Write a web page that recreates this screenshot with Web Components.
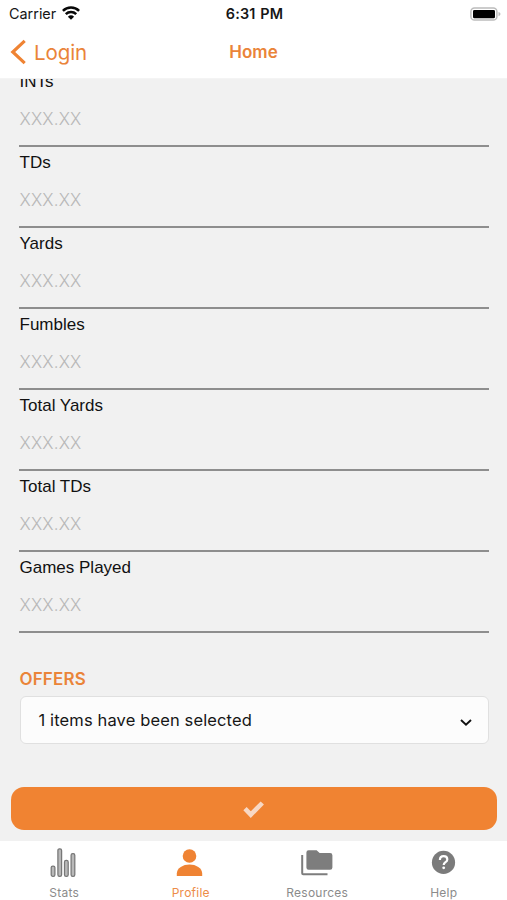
<!DOCTYPE html>
<html lang="en"><head><meta charset="utf-8"><title>Home</title>
<style>html,body{margin:0;height:100%;overflow:hidden;background:#f1f1f1}</style></head><body>
<profile-app></profile-app>
<script>
const make=(name,html,fn)=>customElements.define(name,class extends HTMLElement{
  constructor(){super();this.attachShadow({mode:'open'}).innerHTML='<style>*{box-sizing:border-box}</style>'+html;}
  connectedCallback(){if(fn)fn(this,this.shadowRoot);}
});
make('status-bar',`<style>:host{display:grid;grid-template-columns:1fr auto 1fr;height:27px;align-items:center;padding:0 7px 0 9px;color:#161616}
.l{display:flex;align-items:center;gap:6px;font-size:14.4px;letter-spacing:0}.t{font-size:14.4px;font-weight:600;letter-spacing:.22px;word-spacing:.8px}svg{display:block;margin-bottom:1px}.b{justify-self:end;margin:0 -1px 0 0}</style>
<div class="l"><span>Carrier</span><svg width="18" height="14" viewBox="0 0 18 14"><g fill="none" stroke="#080808" stroke-width="2.5"><path d="M.9 4.9a11.5 11.5 0 0 1 16.2 0"/><path d="M3.8 8.1a7.4 7.4 0 0 1 10.4 0"/></g><path d="M9 13.8 5.9 10.7a4.5 4.5 0 0 1 6.2 0z" fill="#080808"/></svg></div>
<div class="t">6:31 PM</div>
<svg class="b" width="31" height="14" viewBox="0 0 31 14"><rect x=".9" y=".9" width="26" height="12.2" rx="3.6" fill="#fff" stroke="#bcbcbc" stroke-width="1.5"/><rect x="3" y="2.9" width="22" height="8.4" rx="1.4" fill="#000"/><path d="M28.5 5v4.2q2-.6 2-2.1t-2-2.1z" fill="#bcbcbc"/></svg>`);
make('nav-bar',`<style>:host{display:grid;grid-template-columns:1fr auto 1fr;height:50px;align-items:center;padding:0 10px;color:#ea8439}
.l{display:flex;align-items:center;gap:7px;font-size:20.5px;letter-spacing:-.1px}.t{font-size:17px;font-weight:600}svg{display:block}</style>
<div class="l"><svg width="17" height="26" viewBox="0 0 17 26"><path d="M14.7 1.9 2.8 13l11.9 11.1" fill="none" stroke="#ef8333" stroke-width="3.2"/></svg><slot name="back"></slot></div><div class="t"><slot></slot></div>`);
make('stat-field',`<style>:host{display:block;height:81px;border-bottom:2px solid #8e8e8e;font:17px/20px "Liberation Sans",Arial,sans-serif;color:#111}
.l{padding:6px 0 0 1px;height:43px}.p{padding-left:1px;font:17px/20px Inter,sans-serif;font-weight:300;letter-spacing:.15px;color:#b8b8b8}</style>
<div class="l"><slot></slot></div><div class="p">XXX.XX</div>`);
make('multi-select',`<style>:host{display:flex;align-items:center;justify-content:space-between;height:48px;border:1px solid #e0e0e0;border-radius:6px;background:#fcfcfc;padding:0 15px 0 18px;font-size:16.5px;letter-spacing:.13px;color:#161616}svg{display:block;margin-top:3px}</style>
<span><slot></slot></span><svg width="14" height="10" viewBox="0 0 14 10"><path d="m2 3 5 4.7L12 3" fill="none" stroke="#111" stroke-width="1.9"/></svg>`);
make('submit-button',`<style>:host{display:grid;place-items:center;height:43px;border-radius:13px;background:#f08332}svg{display:block}</style>
<svg width="22" height="18" viewBox="0 0 22 18"><path d="m2 8.6 5.8 6L19.3 3" fill="none" stroke="#f8d8c4" stroke-width="4.6"/></svg>`);
const icons={
stats:'<g transform="translate(0 -1.4)" fill="#b9b9b9" stroke="#777" stroke-width="1.25"><rect x="3.2" y="20.4" width="3.7" height="10.4" rx="1.6"/><rect x="9.9" y="3.2" width="3.7" height="27.6" rx="1.6"/><rect x="16.5" y="14.8" width="3.7" height="16" rx="1.6"/><rect x="23.1" y="8" width="3.7" height="22.8" rx="1.6"/></g>',
profile:'<circle cx="14.5" cy="9" r="6.8" fill="#ef8333"/><path d="M1.8 29.1v-2.5c0-5.8 6.3-9.2 12.7-9.2s12.7 3.4 12.7 9.2v2.5z" fill="#ef8333"/>',
resources:'<path d="M5.4 5.4Q5.4 3.2 7.6 3.2h8l3 2.8h10.5q2.3 0 2.3 2.3v12.2q0 2.3-2.3 2.3H7.6q-2.2 0-2.2-2.3z" fill="#7d7d7d"/><path d="M1.2 8v18.3q0 1 1 1H26.5" fill="none" stroke="#7d7d7d" stroke-width="2"/>',
help:'<g transform="translate(.5 .8)"><circle cx="15" cy="14.6" r="11.6" fill="#7b7b7b"/><path d="M11.4 12.1c0-2.3 1.6-3.7 3.7-3.7s3.7 1.3 3.7 3.2c0 2.8-3.6 2.7-3.6 5.5" fill="none" stroke="#fff" stroke-width="2.2"/><circle cx="15.2" cy="20" r="1.4" fill="#fff"/></g>'};
make('tab-item',`<style>:host{display:flex;flex-direction:column;align-items:center;color:#8b8b8b;font-size:12px;line-height:16px;letter-spacing:.25px;padding-top:6px}:host([active]){color:#ed8c48}svg{display:block;margin-bottom:5px}</style><svg width="32" height="33"></svg><slot></slot>`,(h,r)=>{const s=r.querySelector('svg');s.innerHTML=icons[h.getAttribute('icon')];});
make('profile-app',`<style>:host{display:flex;flex-direction:column;width:507px;height:900px;background:#f1f1f1;font-family:Inter,sans-serif;overflow:hidden}
header{background:#fff;height:79px;flex:none;border-bottom:1px solid #f4f4f4}
main{height:762px;flex:none;overflow:hidden;display:flex;flex-direction:column;padding:0 10.5px}
.f{margin:-13px 8px 0}stat-field{flex:none}h2{margin:35px 8px 6px 9px;font-size:17px;line-height:22px;font-weight:600;letter-spacing:.15px;color:#ea8439}
multi-select{flex:none;margin:0 8px 0 9px}submit-button{flex:none;margin-top:43px}
nav{height:59px;background:#fff;padding-left:1px;display:grid;grid-template-columns:repeat(4,1fr)}</style>
<header><status-bar></status-bar><nav-bar><span slot="back">Login</span>Home</nav-bar></header>
<main><div class="f"><stat-field>INTs</stat-field><stat-field>TDs</stat-field><stat-field>Yards</stat-field><stat-field>Fumbles</stat-field><stat-field>Total Yards</stat-field><stat-field>Total TDs</stat-field><stat-field>Games Played</stat-field></div>
<h2>OFFERS</h2><multi-select>1 items have been selected</multi-select><submit-button></submit-button></main>
<nav><tab-item icon="stats">Stats</tab-item><tab-item icon="profile" active>Profile</tab-item><tab-item icon="resources">Resources</tab-item><tab-item icon="help">Help</tab-item></nav>`);
</script></body></html>
